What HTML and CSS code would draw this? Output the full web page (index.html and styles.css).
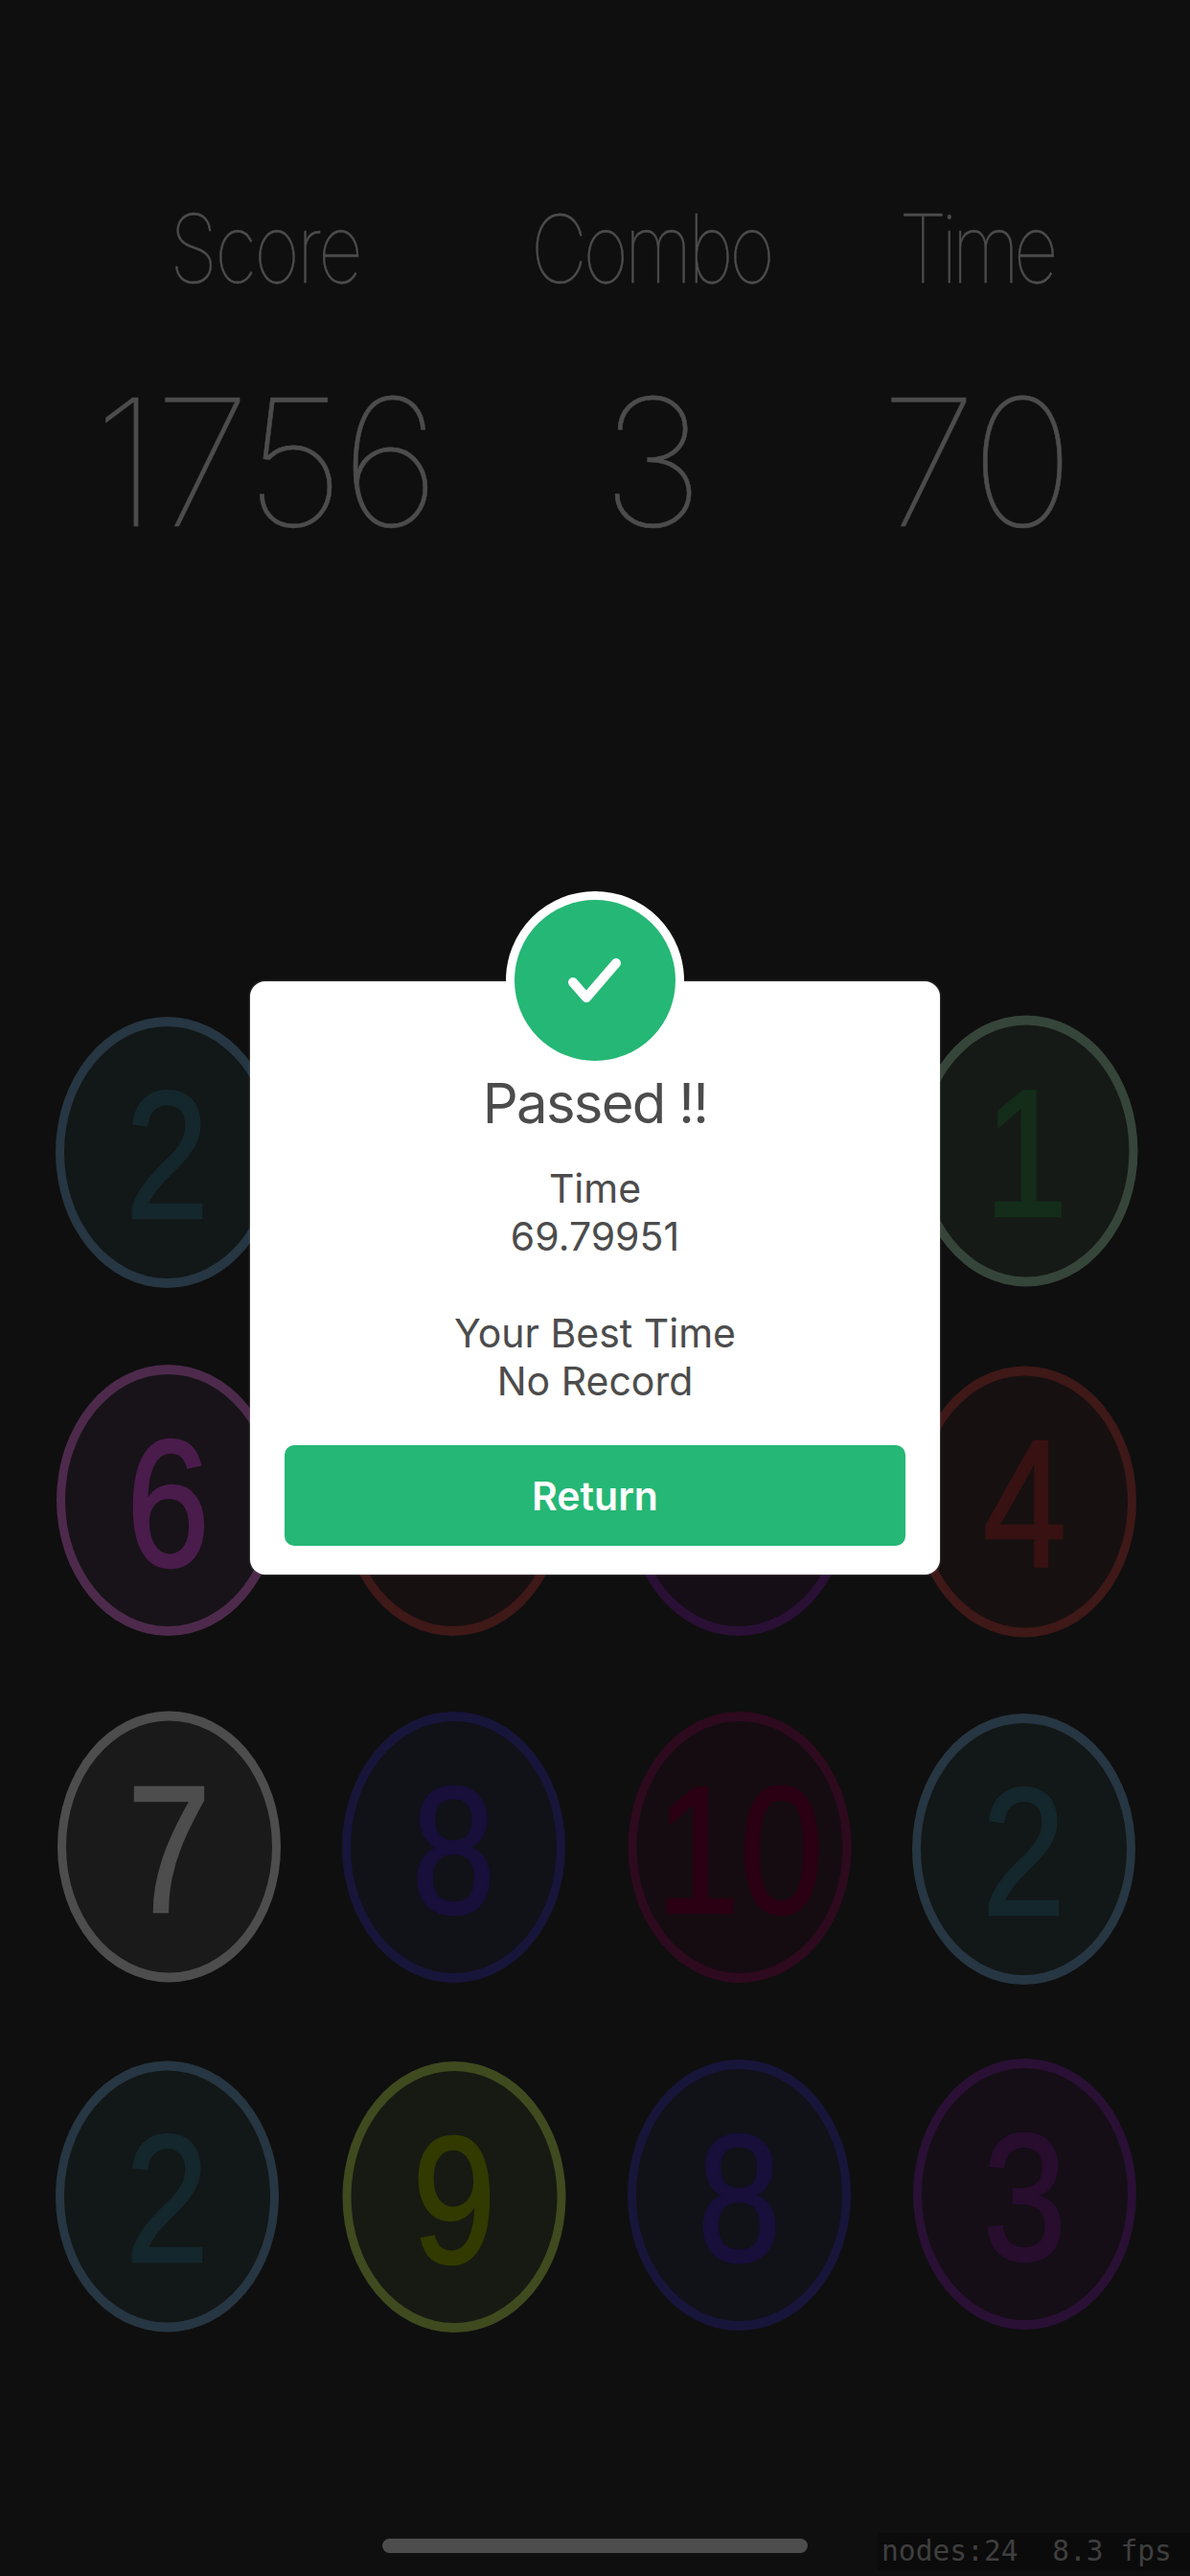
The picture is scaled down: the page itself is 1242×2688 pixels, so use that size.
FILE: index.html
```html
<!DOCTYPE html>
<html lang="en">
<head>
<meta charset="utf-8">
<title>Passed</title>
<link rel="stylesheet" href="styles.css">
</head>
<body>
<main class="screen">
  <section class="stats">
    <div class="stat stat-score"><span class="stat-label">Score</span><span class="stat-value">1756</span></div>
    <div class="stat stat-combo"><span class="stat-label">Combo</span><span class="stat-value">3</span></div>
    <div class="stat stat-time"><span class="stat-label">Time</span><span class="stat-value">70</span></div>
  </section>

  <section class="board">
    <div class="node c-blue"><span>2</span></div>
    <div class="node c-none"></div>
    <div class="node c-none"></div>
    <div class="node c-green d-r1c4"><span>1</span></div>
    <div class="node c-magenta d-r2c1"><span>6</span></div>
    <div class="node c-red"></div>
    <div class="node c-purple"></div>
    <div class="node c-red d-r2c4"><span>4</span></div>
    <div class="node c-grey d-r3c1"><span>7</span></div>
    <div class="node c-indigo d-r3c2"><span>8</span></div>
    <div class="node c-wine d-r3c3"><span>10</span></div>
    <div class="node c-blue d-r3c4"><span>2</span></div>
    <div class="node c-blue d-r4c1"><span>2</span></div>
    <div class="node c-olive d-r4c2"><span>9</span></div>
    <div class="node c-indigo d-r4c3"><span>8</span></div>
    <div class="node c-purple d-r4c4"><span>3</span></div>
  </section>

  <section class="modal">
    <div class="badge">
      <svg class="badge-check" viewBox="0 0 168 168" aria-hidden="true">
        <path d="M61 86 L75 102 L106 66"/>
      </svg>
    </div>
    <h1 class="modal-title">Passed !!</h1>
    <p class="modal-text">Time<br>69.79951</p>
    <p class="modal-text">Your Best Time<br>No Record</p>
    <button class="modal-button" type="button">Return</button>
  </section>

  <div class="home-indicator"></div>
  <div class="debug">nodes:24  8.3 fps</div>
</main>
</body>
</html>
```
FILE: styles.css
```css
* { box-sizing: border-box; }
html, body { margin: 0; padding: 0; background: #0f0f0f; }
.screen {
  position: relative;
  width: 1242px;
  height: 2688px;
  overflow: hidden;
  background: #0f0f0f;
  font-family: "Liberation Sans", sans-serif;
}

/* stats */
.stats {
  display: grid;
  grid-template-columns: 555px 250px 1fr;
  height: 1060px;
  padding-top: 205px;
  align-content: start;
}
.stat {
  display: flex;
  flex-direction: column;
  align-items: center;
  color: #4c4c4c;
  font-family: "Inter", sans-serif;
  font-weight: 100;
}
.stat-score { width: 553px; --label-track: -3px; }
.stat-combo { width: 248px; --label-track: -4.5px; }
.stat-time { width: 160px; margin-left: 133px; --label-track: -6.5px; }
.stat-label {
  font-size: 82px;
  line-height: 110px;
  letter-spacing: var(--label-track);
  white-space: nowrap;
  transform: scale(1, 1.2);
  -webkit-text-stroke: 0.4px currentColor;
}
.stat-value {
  margin-top: 72px;
  font-size: 154px;
  line-height: 190px;
  letter-spacing: -3px;
  white-space: nowrap;
  transform: scale(1.19, 1.2);
  -webkit-text-stroke: 0.5px currentColor;
}

/* board */
.board {
  display: grid;
  grid-template-columns: repeat(4, 233px);
  grid-auto-rows: 283px;
  column-gap: 65px;
  row-gap: 79.5px;
  padding-left: 57.5px;
  margin-top: 1px;
}
.node {
  display: flex;
  align-items: center;
  justify-content: center;
  border-radius: 50%;
  border-style: solid;
  border-width: 10px 9px;
  border-color: var(--ring);
  background: var(--fill);
  color: var(--ink);
  font-size: 157px;
  line-height: 1;
}
.node span {
  transform: translate(0.5px, 3px) scale(1, 1.2);
  -webkit-text-stroke: 2px currentColor;
}
.c-none { visibility: hidden; }
.c-blue { --ring: #263642; --fill: #121718; --ink: #14272c; }
.c-green { --ring: #36453a; --fill: #161a16; --ink: #132d1a; }
.c-magenta { --ring: #4d2a4c; --fill: #181318; --ink: #4a1c4c; }
.c-red { --ring: #3f1818; --fill: #171010; --ink: #381212; }
.c-purple { --ring: #2a1035; --fill: #150e16; --ink: #280d2f; }
.c-grey { --ring: #4d4d4d; --fill: #1a1a1a; --ink: #4d4d4d; }
.c-indigo { --ring: #18153a; --fill: #111118; --ink: #180f3b; }
.c-olive { --ring: #3f4a1f; --fill: #171a12; --ink: #333a00; }
.c-wine { --ring: #2e0a1e; --fill: #150c12; --ink: #2a0012; }

.d-r1c4 { translate: 2.5px -1.5px; }
.d-r2c1 { translate: 1px 0; }
.d-r2c4 { translate: 1px 1.5px; }
.d-r3c1 { translate: 2px -0.5px; }
.d-r3c2 { translate: 1px 0; }
.d-r3c3 { translate: 1.5px 0; }
.d-r3c4 { translate: 0 2px; }
.d-r4c1 { translate: 0 1.5px; }
.d-r4c2 { translate: 1.5px 2px; }
.d-r4c3 { translate: 1px 0; }
.d-r4c4 { translate: 1px -1px; }

/* modal */
.modal {
  position: absolute;
  left: 261px;
  top: 1024px;
  width: 720px;
  height: 619px;
  padding: 92px 36px 0;
  display: flex;
  flex-direction: column;
  align-items: center;
  background: #fff;
  border-radius: 16px;
  box-shadow: 0 0 2px rgba(150,150,150,.9);
  color: #4c4c4c;
  font-family: "Inter", sans-serif;
  text-align: center;
}
.badge {
  position: absolute;
  left: 267px;
  top: -94px;
  width: 186px;
  height: 186px;
  border-radius: 50%;
  border: 9px solid #fff;
  background: #25b775;
}
.badge-check {
  display: block;
  width: 168px;
  height: 168px;
  fill: none;
  stroke: #fff;
  stroke-width: 10;
  stroke-linecap: round;
  stroke-linejoin: round;
}
.modal-title {
  margin: 0;
  font-size: 58px;
  line-height: 70px;
  font-weight: 400;
  letter-spacing: -1.7px;
}
.modal-text {
  margin: 0;
  font-size: 41px;
  line-height: 50px;
}
.modal-title + .modal-text { margin-top: 29px; }
.modal-text + .modal-text { margin-top: 51px; }
.modal-button {
  margin-top: 42px;
  width: 648px;
  height: 105px;
  border: 0;
  border-radius: 10px;
  background: #25b775;
  color: #fff;
  font-family: "Inter", sans-serif;
  font-size: 41px;
  font-weight: 600;
}

/* overlays at the foot */
.home-indicator {
  position: absolute;
  left: 399px;
  top: 2649px;
  width: 444px;
  height: 15px;
  border-radius: 8px;
  background: #4d4d4d;
}
.debug {
  position: absolute;
  left: 916px;
  top: 2643px;
  width: 326px;
  height: 39px;
  padding-left: 4px;
  background: #0b0b0b;
  color: #3f3f3f;
  font-family: "DejaVu Sans Mono", monospace;
  font-size: 29.6px;
  line-height: 39px;
  white-space: pre;
}
```
